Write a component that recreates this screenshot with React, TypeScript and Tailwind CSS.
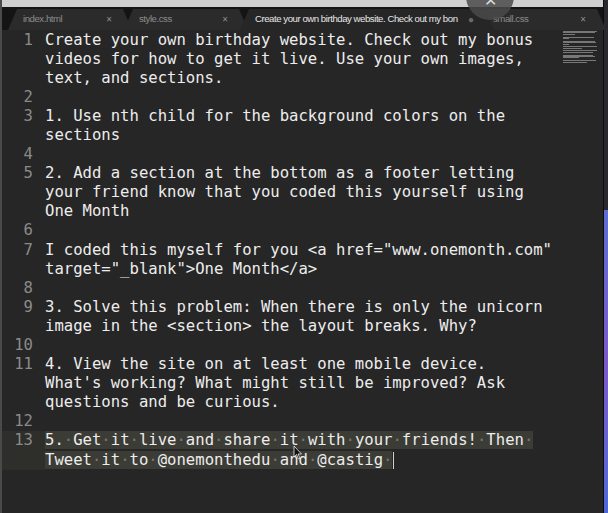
import React from "react";

type Line = { n?: number; text: string; sel?: boolean };

const lines: Line[] = [
  { n: 1, text: "Create your own birthday website. Check out my bonus" },
  { text: "videos for how to get it live. Use your own images," },
  { text: "text, and sections." },
  { n: 2, text: "" },
  { n: 3, text: "1. Use nth child for the background colors on the" },
  { text: "sections" },
  { n: 4, text: "" },
  { n: 5, text: "2. Add a section at the bottom as a footer letting" },
  { text: "your friend know that you coded this yourself using" },
  { text: "One Month" },
  { n: 6, text: "" },
  { n: 7, text: 'I coded this myself for you <a href="www.onemonth.com"' },
  { text: 'target="_blank">One Month</a>' },
  { n: 8, text: "" },
  { n: 9, text: "3. Solve this problem: When there is only the unicorn" },
  { text: "image in the <section> the layout breaks. Why?" },
  { n: 10, text: "" },
  { n: 11, text: "4. View the site on at least one mobile device." },
  { text: "What's working? What might still be improved? Ask" },
  { text: "questions and be curious." },
  { n: 12, text: "" },
  { n: 13, text: "5. Get it live and share it with your friends! Then ", sel: true },
  { text: "Tweet it to @onemonthedu and @castig ", sel: true },
];

const tabs = [
  { label: "index.html", left: 6, width: 124, active: false, mark: "×" },
  { label: "style.css", left: 122, width: 124, active: false, mark: "×" },
  { label: "Create your own birthday website. Check out my bon", left: 238, width: 254, active: true, mark: "●" },
  { label: "small.css", left: 476, width: 128, active: false, mark: "×" },
];

const SelText = ({ text }: { text: string }) => (
  <span className="bg-[#3c3c36]">
    {text.split("").map((c, i) =>
      c === " " ? (
        <span key={i} className="text-[#77776f]">·</span>
      ) : (
        <span key={i}>{c}</span>
      )
    )}
  </span>
);

const Minimap = () => (
  <div className="absolute right-[4px] top-[1px] flex w-[36px] flex-col gap-[0.4px] opacity-70">
    {[34, 32, 12, 0, 31, 6, 0, 32, 33, 6, 0, 34, 19, 0, 34, 30, 0, 30, 32, 16, 0, 33, 24].map((w, i) => (
      <div key={i} className="h-[1px] bg-[#9a9a9a]" style={{ width: w }} />
    ))}
  </div>
);

export default function App() {
  return (
    <div className="flex h-[513px] w-[608px] overflow-hidden bg-[#1c1c1c]">
      <div className="relative flex h-full w-[603px] flex-col border-l-[2px] border-[#4a4a4a] bg-[#262626]">
        <div className="h-[7px] bg-[#cfcfcf]" />
        <div className="relative h-[23px] bg-[#141414]">
          {tabs.map((t) => (
            <div
              key={t.label}
              className={
                "absolute top-[2px] flex h-[21px] items-center justify-between rounded-t-[6px] pl-[15px] pr-[20px] [clip-path:polygon(9px_0,calc(100%-9px)_0,100%_100%,0_100%)] " +
                (t.active ? "z-10 bg-[#262626] text-[#e6e6e6]" : "bg-[#2b2b2b] text-[#8c8c8c]")
              }
              style={{ left: t.left, width: t.width }}
            >
              <span className="whitespace-nowrap font-['Liberation_Sans',sans-serif] text-[9.6px] tracking-[-0.45px]">
                {t.label}
              </span>
              <span className={"text-[10px] " + (t.active ? "text-[#6a6a6a]" : "text-[#8c8c8c]")}>{t.mark}</span>
            </div>
          ))}
          <div className="absolute left-[464px] top-[-35px] z-20 flex h-[48px] w-[48px] items-start justify-center rounded-full bg-[#4a4a4a]/85 pt-[20px] text-[16px] leading-[16px] text-[#dddddd]">
            ✕
          </div>
        </div>
        <div className="relative flex-1 pt-[0.5px] font-['DejaVu_Sans_Mono',monospace] text-[15.6px] text-[#ededed]">
          {lines.map((l, i) => (
            <div key={i} className="flex h-[19.1px] items-center leading-[19.1px]">
              <div
                className={
                  "h-full w-[43px] pr-[12px] text-right text-[#8a8a8a] " +
                  (l.sel ? "bg-[#2e2e2b]" : "")
                }
              >
                {l.n ?? ""}
              </div>
              <div className="whitespace-pre">
                {l.sel ? <SelText text={l.text} /> : l.text}
                {i === lines.length - 1 && (
                  <span className="ml-[1px] inline-block h-[17px] w-[1px] bg-[#d0d0d0] align-middle" />
                )}
              </div>
            </div>
          ))}
          <svg className="absolute left-[291px] top-[415px]" width="10" height="15" viewBox="0 0 10 15">
            <path d="M1 1 L1 12 L3.5 9.5 L5.5 14 L7 13.3 L5 9 L8.5 9 Z" fill="#111" stroke="#eee" strokeWidth="0.8" />
          </svg>
          <Minimap />
        </div>
      </div>
      <div className="flex h-full w-[5px] flex-col border-l border-[#0c0c0c]">
        <div className="h-[210px] bg-[#2a2a2e]" />
        <div className="flex-1 bg-gradient-to-b from-[#5a6fd0] via-[#7b5ac8] to-[#4b6ad6]" />
      </div>
    </div>
  );
}
